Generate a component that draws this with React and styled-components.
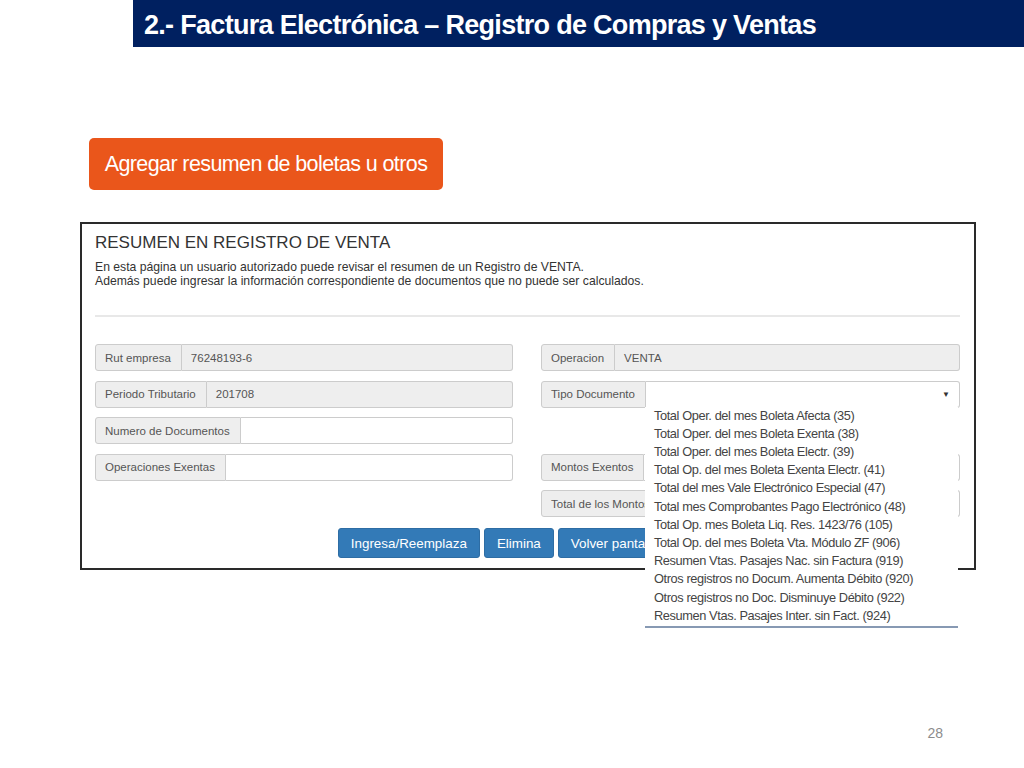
import styled, { createGlobalStyle } from "styled-components";

const GlobalStyle = createGlobalStyle`
  html, body {
    margin: 0;
    padding: 0;
    background: #fff;
  }
  body {
    font-family: "Liberation Sans", Arial, sans-serif;
    color: #333;
  }
`;

const Page = styled.div`
  width: 1024px;
  height: 768px;
  display: flex;
  flex-direction: column;
  overflow: hidden;
`;

const TitleBar = styled.div`
  margin-left: 133px;
  height: 47px;
  box-sizing: border-box;
  background: #002060;
  padding: 4px 0 0 11px;
  display: flex;
  align-items: center;
  color: #fff;
  font-weight: bold;
  font-size: 27px;
  letter-spacing: -0.7px;
`;

const OrangeButton = styled.div`
  margin: 91px 0 0 89px;
  width: 354px;
  height: 52px;
  box-sizing: border-box;
  background: #ea561b;
  border-radius: 5px;
  color: #fff;
  font-size: 21.5px;
  letter-spacing: -0.6px;
  display: flex;
  align-items: center;
  justify-content: center;
`;

const Panel = styled.div`
  margin: 32px 0 0 80px;
  width: 896px;
  height: 348px;
  box-sizing: border-box;
  border: 2px solid #2a2a2a;
  padding: 0 14px 0 13px;
  display: flex;
  flex-direction: column;
`;

const Heading = styled.h2`
  margin: 9px 0 0;
  font-size: 17px;
  font-weight: normal;
  line-height: 20px;
  color: #333;
`;

const Description = styled.p`
  margin: 7px 0 0;
  font-size: 12.2px;
  line-height: 14px;
  color: #333;
`;

const Rule = styled.div`
  margin-top: 27px;
  height: 2px;
  background: #e8e8e8;
`;

const FormGrid = styled.div`
  margin-top: 27px;
  display: grid;
  grid-template-columns: 418px 419px;
  column-gap: 28px;
  grid-auto-rows: 27px;
  row-gap: 9.5px;
`;

const Group = styled.div`
  display: flex;
  position: relative;
  grid-column: ${(p) => p.col};
  grid-row: ${(p) => p.row};
  z-index: ${(p) => (p.open ? 5 : "auto")};
  font-size: 11.5px;
  color: #555;
`;

const Addon = styled.div`
  flex: none;
  display: flex;
  align-items: center;
  padding: 0 10px 0 9px;
  background: #eee;
  border: 1px solid #ccc;
  border-radius: 3px 0 0 3px;
  white-space: nowrap;
`;

const Field = styled.div`
  flex: 1;
  display: flex;
  align-items: center;
  justify-content: space-between;
  padding: 0 10px 0 9px;
  background: ${(p) => (p.disabled ? "#eee" : "#fff")};
  border: 1px solid #ccc;
  border-left: none;
  border-radius: 0 3px 3px 0;
  color: #555;
`;

const Caret = styled.span`
  font-size: 8px;
  color: #333;
  margin-right: -1px;
`;

const Dropdown = styled.ul`
  position: absolute;
  top: 26px;
  left: 104px;
  width: 313px;
  margin: 0;
  padding: 0 0 1px;
  list-style: none;
  background: #fff;
  border-bottom: 2px solid #8799b3;
`;

const Option = styled.li`
  padding-left: 9px;
  font-size: 12.8px;
  line-height: 18.2px;
  letter-spacing: -0.4px;
  color: #444;
  white-space: nowrap;
`;

const Actions = styled.div`
  margin-top: 11px;
  display: flex;
  justify-content: center;
  gap: 4px;
  padding-left: 8px;
`;

const Button = styled.div`
  height: 30px;
  box-sizing: border-box;
  padding: 0 12px;
  display: flex;
  align-items: center;
  background: #337ab7;
  border: 1px solid #2e6da4;
  border-radius: 3px;
  color: #fff;
  font-size: 13.4px;
  white-space: nowrap;
`;

const Footer = styled.div`
  margin-top: 155px;
  padding-right: 81px;
  display: flex;
  justify-content: flex-end;
  font-size: 14px;
  color: #8c8c8c;
`;

const options = [
  "Total Oper. del mes Boleta Afecta (35)",
  "Total Oper. del mes Boleta Exenta (38)",
  "Total Oper. del mes Boleta Electr. (39)",
  "Total Op. del mes Boleta Exenta Electr. (41)",
  "Total del mes Vale Electrónico Especial (47)",
  "Total mes Comprobantes Pago Electrónico (48)",
  "Total Op. mes Boleta Liq. Res. 1423/76 (105)",
  "Total Op. del mes Boleta Vta. Módulo ZF (906)",
  "Resumen Vtas. Pasajes Nac. sin Factura (919)",
  "Otros registros no Docum. Aumenta Débito (920)",
  "Otros registros no Doc. Disminuye Débito (922)",
  "Resumen Vtas. Pasajes Inter. sin Fact. (924)",
];

export default function App() {
  return (
    <Page>
      <GlobalStyle />
      <TitleBar>2.- Factura Electrónica – Registro de Compras y Ventas</TitleBar>
      <OrangeButton>Agregar resumen de boletas u otros</OrangeButton>
      <Panel>
        <Heading>RESUMEN EN REGISTRO DE VENTA</Heading>
        <Description>
          En esta página un usuario autorizado puede revisar el resumen de un Registro de VENTA.
          <br />
          Además puede ingresar la información correspondiente de documentos que no puede ser calculados.
        </Description>
        <Rule />
        <FormGrid>
          <Group col={1} row={1}>
            <Addon>Rut empresa</Addon>
            <Field disabled>76248193-6</Field>
          </Group>
          <Group col={1} row={2}>
            <Addon>Periodo Tributario</Addon>
            <Field disabled>201708</Field>
          </Group>
          <Group col={1} row={3}>
            <Addon>Numero de Documentos</Addon>
            <Field />
          </Group>
          <Group col={1} row={4}>
            <Addon>Operaciones Exentas</Addon>
            <Field />
          </Group>
          <Group col={2} row={1}>
            <Addon>Operacion</Addon>
            <Field disabled>VENTA</Field>
          </Group>
          <Group col={2} row={2} open>
            <Addon>Tipo Documento</Addon>
            <Field>
              <span />
              <Caret>▼</Caret>
            </Field>
            <Dropdown>
              {options.map((o) => (
                <Option key={o}>{o}</Option>
              ))}
            </Dropdown>
          </Group>
          <Group col={2} row={4}>
            <Addon>Montos Exentos</Addon>
            <Field />
          </Group>
          <Group col={2} row={5}>
            <Addon>Total de los Montos Exentos</Addon>
            <Field />
          </Group>
        </FormGrid>
        <Actions>
          <Button>Ingresa/Reemplaza</Button>
          <Button>Elimina</Button>
          <Button>Volver pantalla principal</Button>
        </Actions>
      </Panel>
      <Footer>28</Footer>
    </Page>
  );
}
